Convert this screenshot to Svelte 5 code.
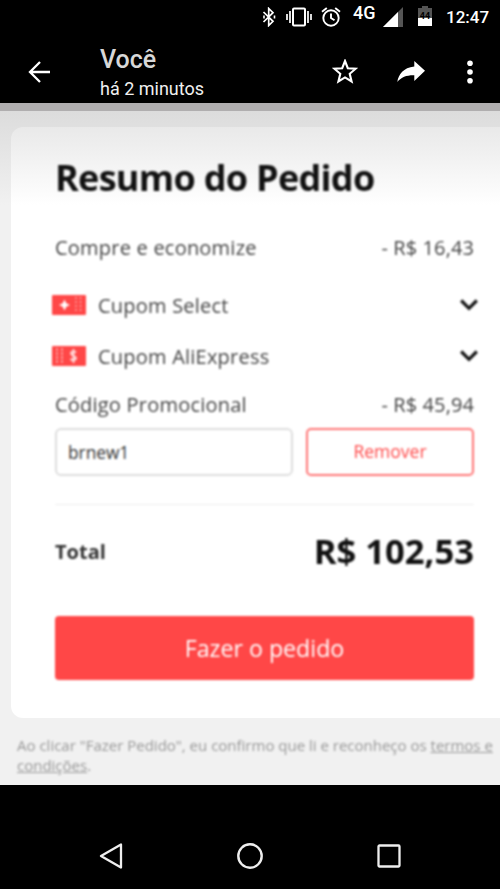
<script lang="ts">
	interface Coupon {
		label: string;
		kind: 'select' | 'ali';
	}

	const coupons: Coupon[] = [
		{ label: 'Cupom Select', kind: 'select' },
		{ label: 'Cupom AliExpress', kind: 'ali' },
	];

	let promoCode = $state('brnew1');
</script>

<div class="screen">
	<div class="status-bar">
		<svg class="bluetooth" width="14" height="20" viewBox="0 0 14 20" fill="none" stroke="#fff" stroke-width="1.7">
			<path d="M1.500 5 11 14.300 6.700 18.500v-17L11 5.700 1.500 15"/>
			<path d="M2 8.500v3M12.500 8.500v3" stroke-width="1.600"/>
		</svg>
		<svg class="vibrate" width="26" height="20" viewBox="0 0 26 20" fill="none" stroke="#fff" stroke-width="2">
			<rect x="7" y="1.500" width="12" height="17" rx="1"/>
			<path d="M4 4v12M22 4v12M1 7v6M25 7v6" stroke-width="1.700"/>
		</svg>
		<svg class="alarm" width="20" height="20" viewBox="0 0 20 20" fill="none" stroke="#fff" stroke-width="1.900">
			<circle cx="10" cy="11" r="7.700"/>
			<path d="M10 6.500V11l3.500 2.200M1 4.800 5.800 1M19 4.800 14.200 1"/>
		</svg>
		<span class="network">4G</span>
		<svg class="signal" width="20" height="20" viewBox="0 0 20 20">
			<path d="M20 0v20H0z" fill="#555"/>
			<path d="M15 5v15H0z" fill="#fff"/>
		</svg>
		<svg class="battery" width="14" height="20" viewBox="0 0 14 20">
			<path d="M0 2h4V0h6v2h4v10H0z" fill="#555"/>
			<path d="M0 12h14v8H0z" fill="#fff"/>
			<text x="7" y="12.500" text-anchor="middle" font-size="9" font-weight="700" fill="#000">44</text>
		</svg>
		<span class="clock">12:47</span>
	</div>

	<header class="app-bar">
		<button class="icon-btn back" aria-label="Voltar">
			<svg width="22" height="22" viewBox="0 0 22 22" fill="none" stroke="#fff" stroke-width="2.300">
				<path d="M22 11H2M12 1 2 11l10 10"/>
			</svg>
		</button>
		<div class="sender">
			<div class="sender-name">Você</div>
			<div class="sender-time">há 2 minutos</div>
		</div>
		<button class="icon-btn star" aria-label="Favoritar">
			<svg width="26" height="25" viewBox="0 0 26 25" fill="none" stroke="#fff" stroke-width="2.100">
				<path d="m13 2 2.800 7.200 7.900.5-6 5.100 1.900 7.700-6.600-4.100-6.600 4.100 1.900-7.700-6-5.100 7.900-.5z"/>
			</svg>
		</button>
		<button class="icon-btn share" aria-label="Encaminhar">
			<svg width="28" height="21" viewBox="0 0 28 21" fill="#fff">
				<path d="M17.300 0 28 9.800 17.300 20v-5.700C9.700 14.100 4.600 16 .3 21 1.700 13.400 6.300 6.800 17.300 5.600z"/>
			</svg>
		</button>
		<button class="icon-btn more" aria-label="Mais">
			<svg width="6" height="24" viewBox="0 0 6 24" fill="#fff">
				<circle cx="3" cy="3.200" r="2.800"/>
				<circle cx="3" cy="12" r="2.800"/>
				<circle cx="3" cy="20.800" r="2.800"/>
			</svg>
		</button>
	</header>

	<main class="photo">
		<section class="card">
			<h1>Resumo do Pedido</h1>

			<div class="row saving soft">
				<span class="saving-label">Compre e economize</span>
				<span class="amount">- R$ 16,43</span>
			</div>

			{#each coupons as coupon}
				<div class="row coupon soft">
					<svg class="ticket" width="34" height="20" viewBox="0 0 34 20">
						<rect width="34" height="20" rx="1" fill="#ff4747"/>
						{#if coupon.kind === 'select'}
							<path d="m12.500 4.500 1.800 3.700 3.700 1.800-3.700 1.800-1.800 3.700-1.800-3.700L7 10l3.700-1.800z" fill="#fff"/>
							<path d="M24 2v16M28.500 2v16" stroke="#ffb0b0" stroke-width="1.300" stroke-dasharray="2 2"/>
						{:else}
							<path d="M5 2v16M10 2v16" stroke="#ffaaaa" stroke-width="1.500" stroke-dasharray="3 1"/>
							<path d="M24 6.500c-1-1.300-5-1.500-5 1s5 2 5 4.500-4 2.500-5.500 1M21.500 3v14" fill="none" stroke="#ffe4e4" stroke-width="1.800"/>
						{/if}
					</svg>
					<span class="coupon-label">{coupon.label}</span>
					<svg class="chevron" width="18" height="12" viewBox="0 0 18 12" fill="none" stroke="#111" stroke-width="3.200">
						<path d="m1.200 1.500 7.800 7.800 7.800-7.800"/>
					</svg>
				</div>
			{/each}

			<div class="row promo soft">
				<span class="promo-label">Código Promocional</span>
				<span class="amount">- R$ 45,94</span>
			</div>

			<div class="promo-form soft">
				<input type="text" bind:value={promoCode} aria-label="Código Promocional" />
				<button class="remove">Remover</button>
			</div>

			<div class="row total soft">
				<span class="total-label">Total</span>
				<span class="total-value">R$ 102,53</span>
			</div>

			<button class="submit soft">Fazer o pedido</button>
		</section>

		<div class="terms">
			<div>Ao clicar "Fazer Pedido", eu confirmo que li e reconheço os <u>termos e</u></div>
			<div><u>condições</u>.</div>
		</div>
	</main>

	<nav class="nav-bar">
		<svg width="24" height="26" viewBox="0 0 24 26" fill="none" stroke="#eee" stroke-width="2.300" stroke-linejoin="round">
			<path d="M22 1.500v23L2 13z"/>
		</svg>
		<svg width="26" height="26" viewBox="0 0 26 26" fill="none" stroke="#eee" stroke-width="2.400">
			<circle cx="13" cy="13" r="11.700"/>
		</svg>
		<svg width="24" height="24" viewBox="0 0 24 24" fill="none" stroke="#eee" stroke-width="2.300">
			<rect x="1.500" y="1.500" width="21" height="21" rx="1"/>
		</svg>
	</nav>
</div>

<style>
	:global(body) {
		background: #000;
	}

	.screen {
		width: 500px;
		height: 889px;
		display: flex;
		flex-direction: column;
		overflow: hidden;
		background: #000;
		font-family: Roboto, sans-serif;
	}

	.screen :global(*) {
		box-sizing: border-box;
	}

	svg {
		display: block;
		flex: none;
	}

	button {
		padding: 0;
		border: 0;
		background: none;
		font: inherit;
	}

	.status-bar {
		height: 34px;
		display: flex;
		align-items: center;
		padding-left: 262px;
		color: #fff;
		white-space: nowrap;
	}

	.vibrate {
		margin-left: 10px;
	}

	.alarm {
		margin-left: 9px;
	}

	.network {
		width: 24px;
		margin: 0 6px 9px 12px;
		font-size: 18px;
		font-weight: 500;
		line-height: 1;
	}

	.signal {
		margin-right: 15px;
	}

	.battery {
		margin: -2px 14px 0 0;
	}

	.clock {
		font-size: 17px;
		font-weight: 500;
	}

	.app-bar {
		height: 69px;
		flex: none;
		display: flex;
		align-items: center;
		padding: 7px 0 0 28px;
	}

	.sender {
		width: 182px;
		margin-left: 50px;
		margin-top: 2px;
	}

	.sender-name {
		color: #d8d8d8;
		font-size: 25px;
		font-weight: 500;
		line-height: 30px;
	}

	.sender-time {
		color: #f0f0f0;
		font-size: 18px;
		line-height: 27px;
	}

	.star {
		margin: -1px 0 0 50px;
	}

	.share {
		margin: -1px 0 0 39px;
	}

	.more {
		margin-left: 42px;
	}

	.photo {
		height: 682px;
		flex: none;
		overflow: hidden;
		padding-top: 16px;
		border-top: 8px solid #b0aeaf;
		background: linear-gradient(#dcdcdc, #f1f1f1 94px);
		font-family: 'Open Sans', sans-serif;
	}

	/* low resolution capture inside the viewer */
	h1,
	.soft,
	.terms {
		filter: blur(0.8px);
	}

	.card {
		height: 591px;
		width: 509px;
		margin-left: 11px;
		padding: 26px 46px 0 44px;
		border-radius: 12px;
		background: linear-gradient(#e9e9e9, #fff 78px);
		color: #444;
		font-size: 20px;
	}

	h1 {
		height: 50px;
		margin: 0 0 20px;
		color: #111;
		font-size: 36px;
		font-weight: 700;
		letter-spacing: -0.7px;
		line-height: 49px;
		white-space: nowrap;
	}

	.row {
		display: flex;
		align-items: center;
		justify-content: space-between;
		white-space: nowrap;
	}

	.saving {
		height: 48px;
		margin-bottom: 10px;
	}

	.saving-label,
	.coupon-label,
	.promo-label {
		letter-spacing: 0.22px;
	}

	.amount {
		letter-spacing: 0.1px;
	}

	.coupon {
		height: 51px;
		justify-content: flex-start;
	}

	.coupon-label {
		margin-top: -2px;
	}

	.ticket {
		margin: -3px 12px 0 -3px;
	}

	.chevron {
		margin: -3px -4px 0 auto;
	}

	.promo {
		height: 28px;
		margin: 7px 0 10px;
	}

	.promo-form {
		box-sizing: content-box;
		height: 48px;
		display: grid;
		grid-template-columns: 238px 168px;
		gap: 13px;
		padding-bottom: 28px;
		border-bottom: 1px solid #eee;
	}

	input {
		width: 100%;
		padding: 0 11px;
		border: 2px solid #ddd;
		border-radius: 6px;
		background: #fff;
		color: #333;
		font: 17.3px 'Open Sans', sans-serif;
	}

	.remove {
		padding-bottom: 2px;
		border: 2px solid #ff7474;
		border-radius: 5px;
		color: #ff4747;
		font-size: 17.5px;
	}

	.total {
		height: 92px;
		margin-bottom: 19px;
		color: #111;
		font-weight: 700;
	}

	.total-label {
		color: #333;
	}

	.total-value {
		margin-top: -2px;
		font-size: 34.6px;
	}

	.submit {
		width: 100%;
		height: 64px;
		border-radius: 4px;
		background: #ff4747;
		color: #fff;
		font-size: 23.2px;
	}

	.terms {
		padding: 17px 0 0 17px;
		color: #999;
		font-size: 15px;
		line-height: 20px;
		white-space: nowrap;
	}

	.nav-bar {
		height: 104px;
		display: flex;
		align-items: center;
		justify-content: center;
		gap: 114px;
		padding-top: 37px;
	}
</style>
